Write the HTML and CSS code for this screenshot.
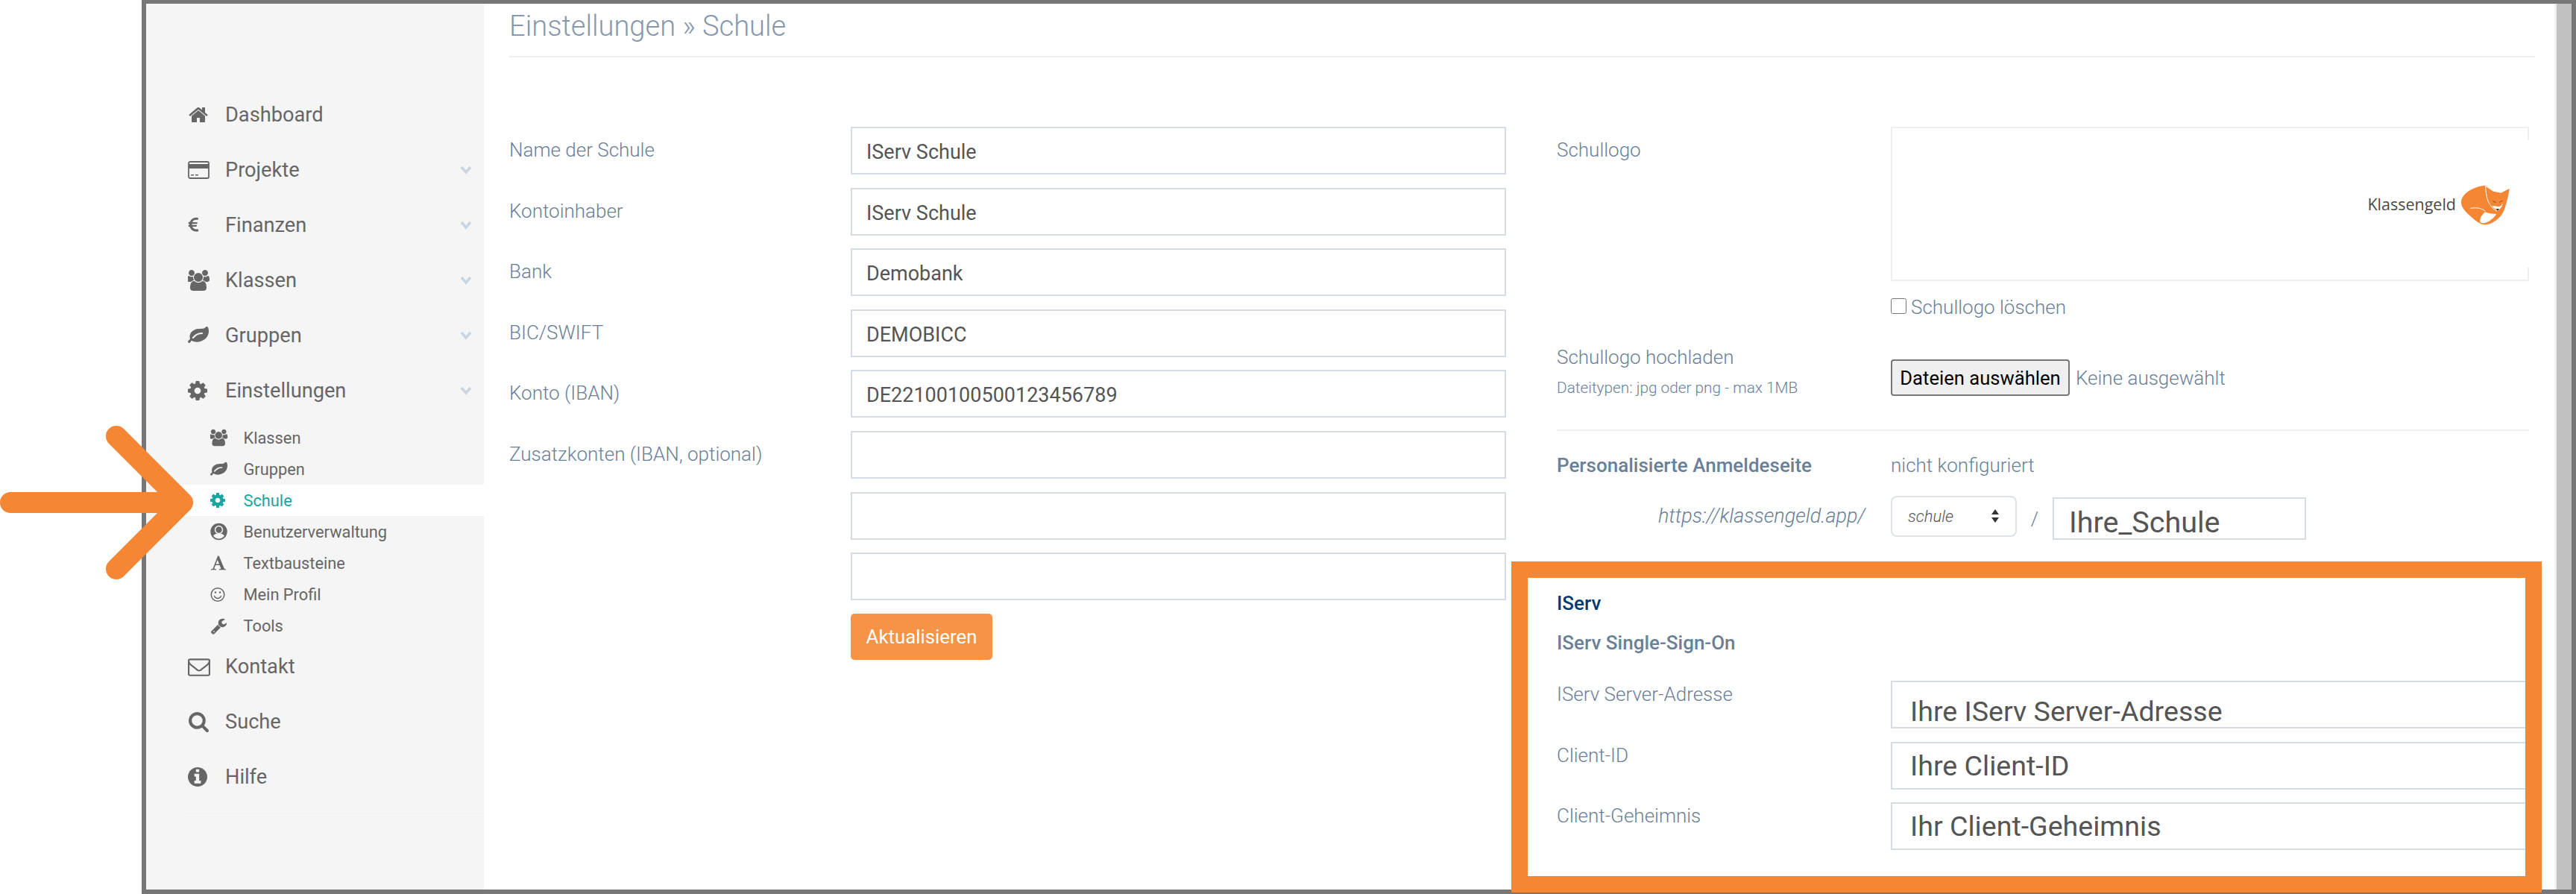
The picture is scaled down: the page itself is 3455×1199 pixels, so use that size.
FILE: index.html
```html
<!DOCTYPE html>
<html lang="de">
<head>
	<meta charset="UTF-8">
	<title>Einstellungen - Schule</title>
	<link rel="stylesheet" href="styles.css">
</head>
<body>
	<div class="frame">
		<div class="sidebar">
			<ul class="nav">
				<li class="nav-item"><svg class="ico" width="28" height="28" viewBox="0 0 1792 1792"><path d="M1472 992v480q0 26-19 45t-45 19h-384v-384h-256v384h-384q-26 0-45-19t-19-45v-480q0-1 .5-3t.5-3l575-474 575 474q1 2 1 6zm223-69l-62 74q-8 9-21 11h-3q-13 0-21-7l-692-577-692 577q-12 8-24 7-13-2-21-11l-62-74q-8-10-7-23.500t11-21.500l719-599q32-26 76-26t76 26l244 204v-195q0-14 9-23t23-9h192q14 0 23 9t9 23v408l219 182q10 8 11 21.500t-7 23.500z"/></svg><span>Dashboard</span></li>
				<li class="nav-item"><svg class="ico" width="29" height="24" viewBox="0 0 29 24"><rect x="1" y="1" width="27" height="22" rx="2" fill="none" stroke="#666" stroke-width="1.800"/><rect x="1" y="4" width="27" height="6"/><rect x="4" y="18" width="4" height="1.500"/><rect x="10" y="18" width="4" height="1.500"/></svg><span>Projekte</span><svg class="chev" width="16" height="12" viewBox="0 0 16 12"><path d="M2 2l6 7 6-7"/></svg></li>
				<li class="nav-item"><svg class="ico" width="24" height="26" viewBox="0 0 1792 1792"><path transform="translate(-330 0)" d="M1360 1307l35 159q3 12-3 22.500t-17 14.500l-5 1q-4 2-10.500 3.500t-16 4.500-21.500 5.500-25.500 5-30 5-33.500 4.500-36.500 3-38.500 1q-234 0-409-130.500t-238-351.500h-95q-13 0-22.500-9.500t-9.500-22.500v-113q0-13 9.500-22.500t22.500-9.500h66q-2-57 1-105h-67q-14 0-23-9t-9-23v-114q0-14 9-23t23-9h98q67-210 243.500-338t400.500-128q102 0 194 23 11 3 20 15 6 11 3 24l-43 159q-3 13-14 19.500t-24 2.500l-4-1q-4-1-11.500-2.500l-17.500-3.500-22.500-3.500-26-3-29-2.500-29.500-1q-126 0-226 64t-150 176h468q16 0 25 12 10 12 7 26l-24 114q-5 26-32 26h-488q-3 37 0 105h459q15 0 25 12 9 12 6 27l-24 112q-2 11-11 18.500t-20 7.500h-387q48 117 149.500 185.500t228.500 68.500q18 0 36-1.500t33.500-3.500 29.500-4.500 24.500-5 18.500-4.500l12-3 5-2q13-5 26 2 12 7 15 21z"/></svg><span>Finanzen</span><svg class="chev" width="16" height="12" viewBox="0 0 16 12"><path d="M2 2l6 7 6-7"/></svg></li>
				<li class="nav-item"><svg class="ico" width="30" height="30" viewBox="0 0 1920 1792"><path id="users" d="M529 896q-162 5-265 128h-134q-82 0-138-40.500t-56-118.500q0-353 124-353 6 0 43.500 21t97.500 42.500 119 21.500q67 0 133-23-5 37-5 66 0 139 81 256zm1071 637q0 120-73 189.500t-194 69.500h-874q-121 0-194-69.500t-73-189.500q0-53 3.500-103.500t14-109 26.500-108.500 43-97.500 62-81 85.500-53.500 111.500-20q10 0 43 21.500t73 48 107 48 135 21.500 135-21.500 107-48 73-48 43-21.500q61 0 111.500 20t85.500 53.500 62 81 43 97.500 26.500 108.500 14 109 3.500 103.500zm-1024-1277q0 106-75 181t-181 75-181-75-75-181 75-181 181-75 181 75 75 181zm704 384q0 159-112.500 271.500t-271.500 112.500-271.500-112.500-112.500-271.500 112.500-271.500 271.500-112.500 271.500 112.500 112.500 271.500zm576 225q0 78-56 118.500t-138 40.500h-134q-103-123-265-128 81-117 81-256 0-29-5-66 66 23 133 23 59 0 119-21.500t97.500-42.500 43.500-21q124 0 124 353zm-128-609q0 106-75 181t-181 75-181-75-75-181 75-181 181-75 181 75 75 181z"/></svg><span>Klassen</span><svg class="chev" width="16" height="12" viewBox="0 0 16 12"><path d="M2 2l6 7 6-7"/></svg></li>
				<li class="nav-item"><svg class="ico" width="28" height="28" viewBox="0 0 1792 1792"><path id="leaf" d="M1280 704q0-26-19-45t-45-19q-172 0-318 49.500t-259.500 134-235.500 219.500q-19 21-19 45 0 26 19 45t45 19q24 0 45-19 27-24 74-71t67-66q137-124 268.500-176t313.500-52q26 0 45-19t19-45zm512-198q0 95-20 193-46 224-184.500 383t-357.500 268q-214 108-438 108-148 0-286-47-15-5-88-42t-96-37q-16 0-39.500 32t-45 70-52.500 70-60 32q-30 0-51-11t-31-24-27-42q-2-4-6-11t-5.500-10-3-9.500-1.500-13.500q0-35 31-73.500t68-65.500 68-56 31-48q0-4-14-38t-16-44q-9-51-9-104 0-115 43.500-220t119-184.500 170.500-139 204-95.500q55-18 145-25.500t179.500-9 178.500-6 163.500-24 113.500-56.500l29.500-29.500 29.500-28 27-20 36.500-16 43.500-4.500q39 0 70.500 46t47.500 112 24 124 8 96z"/></svg><span>Gruppen</span><svg class="chev" width="16" height="12" viewBox="0 0 16 12"><path d="M2 2l6 7 6-7"/></svg></li>
				<li class="nav-item"><svg class="ico" width="26" height="26" viewBox="128 128 1536 1536"><path id="cog" d="M1152 896q0-106-75-181t-181-75-181 75-75 181 75 181 181 75 181-75 75-181zm512-109v222q0 12-8 23t-20 13l-185 28q-19 54-39 91 35 50 107 138 10 12 10 25t-9 23q-27 37-99 108t-94 71q-12 0-26-9l-138-108q-44 23-91 38-16 136-29 186-7 28-36 28h-222q-14 0-24.500-8.500t-11.500-21.500l-28-184q-49-16-90-37l-141 107q-10 9-25 9-14 0-25-11-126-114-165-168-7-10-7-23 0-12 8-23 15-21 51-66.500t54-70.500q-27-50-41-99l-183-27q-13-2-21-12.500t-8-23.500v-222q0-12 8-23t19-13l186-28q14-46 39-92-40-57-107-138-10-12-10-24 0-10 9-23 26-36 98.500-107.500t94.500-71.500q13 0 26 10l138 107q44-23 91-38 16-136 29-186 7-28 36-28h222q14 0 24.500 8.500t11.500 21.500l28 184q49 16 90 37l142-107q9-9 24-9 13 0 25 10 129 119 165 170 7 8 7 22 0 12-8 23-15 21-51 66.500t-54 70.500q26 50 41 98l183 28q13 2 21 12.500t8 23.500z"/></svg><span>Einstellungen</span><svg class="chev" width="16" height="12" viewBox="0 0 16 12"><path d="M2 2l6 7 6-7"/></svg></li>
				<li>
					<ul class="subnav">
						<li class="sub-item"><svg class="ico" width="24" height="24" viewBox="0 0 1920 1792"><use href="#users"/></svg><span>Klassen</span></li>
						<li class="sub-item"><svg class="ico" width="23" height="23" viewBox="0 0 1792 1792"><use href="#leaf"/></svg><span>Gruppen</span></li>
						<li class="sub-item current"><svg class="ico" width="20" height="20" viewBox="128 128 1536 1536"><use href="#cog"/></svg><span>Schule</span></li>
						<li class="sub-item"><svg class="ico" width="23" height="24" viewBox="0 0 23 24"><circle cx="11.500" cy="12" r="11.200"/><circle cx="11.500" cy="9.500" r="5" fill="none" stroke="#f5f5f5" stroke-width="1.500"/><path fill="#f5f5f5" d="M4 17.500c2-2.500 4.500-3.200 7.500-3.200s5.500.7 7.500 3.200c-2 2.700-4.700 3.900-7.500 3.900S6 20.200 4 17.500z"/></svg><span>Benutzerverwaltung</span></li>
						<li class="sub-item"><svg class="ico" width="22" height="24" viewBox="0 0 1792 1792"><path d="M789 559l-170 450q33 0 136.500 2t160.500 2q19 0 57-2-87-253-184-452zm-725 1105l2-79q23-7 56-12.500t57-10.500 49.500-14.500 44.500-29 31-50.500l237-616 280-724h128q8 14 11 21l205 480q33 78 106 257.500t114 274.500q15 34 58 144.500t72 168.500q20 45 35 57 19 15 88 29.500t84 20.500q6 38 6 57 0 5-.5 13.500t-.5 12.500q-63 0-190-8t-191-8q-76 0-215 7t-178 8q0-43 4-78l131-28q1 0 12.500-2.500t15.500-3.500 14.500-4.500 15-6.500 11-8 9-11 2.500-14q0-16-31-96.500t-72-177.500-42-100l-450-2q-26 58-76.500 195.500t-50.500 162.500q0 22 14 37.500t43.500 24.500 48.500 13.500 57 8.500 41 4q1 19 1 58 0 9-2 27-58 0-174.500-10t-174.500-10q-8 0-26.500 4t-21.500 4q-80 14-188 14z"/></svg><span>Textbausteine</span></li>
						<li class="sub-item"><svg class="ico" width="21" height="21" viewBox="0 0 21 21" fill="none" stroke="#666" stroke-width="1.500"><circle cx="10" cy="10.500" r="8.800"/><path d="M5.500 12.500c1 2 2.700 3 4.500 3s3.500-1 4.500-3" stroke-linecap="round"/><circle cx="7" cy="7.500" r="1.200" fill="#666" stroke="none"/><circle cx="13" cy="7.500" r="1.200" fill="#666" stroke="none"/></svg><span>Mein Profil</span></li>
						<li class="sub-item"><svg class="ico" width="23" height="23" viewBox="0 0 1792 1792"><path d="M448 1472q0-26-19-45t-45-19-45 19-19 45 19 45 45 19 45-19 19-45zm644-420l-682 682q-37 37-90 37-52 0-91-37l-106-108q-38-36-38-90 0-53 38-91l681-681q39 98 114.500 173.500t173.500 114.500zm634-435q0 39-23 106-47 134-164.500 217.500t-258.500 83.500q-185 0-316.500-131.500t-131.500-316.500 131.500-316.500 316.500-131.500q58 0 121.500 16.500t107.500 46.500q16 11 16 28t-16 28l-293 169v224l193 107q5-3 79-48.500t135.500-81 70.500-35.500q15 0 23.500 10t8.500 25z"/></svg><span>Tools</span></li>
					</ul>
				</li>
				<li class="nav-item"><svg class="ico" width="30" height="30" viewBox="0 0 1792 1792"><path d="M1664 1504v-768q-32 36-69 66-268 206-426 338-51 43-83 67t-86.500 48.500-102.500 24.500h-2q-48 0-102.500-24.500t-86.500-48.500-83-67q-158-132-426-338-37-30-69-66v768q0 13 9.500 22.500t22.500 9.500h1472q13 0 22.500-9.500t9.500-22.500zm0-1051v-24.500l-.5-13-3-12.500-5.500-9-9-7.500-14-2.500h-1472q-13 0-22.500 9.500t-9.500 22.500q0 168 147 284 193 152 401 317 6 5 35 29.500t46 37.500 44.500 31.500 50.500 27.500 43 9h2q20 0 43-9t50.500-27.500 44.500-31.500 46-37.500 35-29.500q208-165 401-317 54-43 100.500-115.500t46.500-131.500zm128-37v1088q0 66-47 113t-113 47h-1472q-66 0-113-47t-47-113v-1088q0-66 47-113t113-47h1472q66 0 113 47t47 113z"/></svg><span>Kontakt</span></li>
				<li class="nav-item"><svg class="ico" width="29" height="29" viewBox="0 0 1792 1792"><path d="M1216 832q0-185-131.500-316.500t-316.500-131.500-316.500 131.500-131.500 316.500 131.500 316.500 316.500 131.500 316.500-131.500 131.500-316.500zm512 832q0 52-38 90t-90 38q-54 0-90-38l-343-342q-179 124-399 124-143 0-273.500-55.500t-225-150-150-225-55.500-273.500 55.500-273.500 150-225 225-150 273.500-55.500 273.500 55.500 225 150 150 225 55.500 273.500q0 220-124 399l343 343q37 37 37 90z"/></svg><span>Suche</span></li>
				<li class="nav-item"><svg class="ico" width="26" height="26" viewBox="128 128 1536 1536"><path d="M1152 1376v-160q0-14-9-23t-23-9h-96v-512q0-14-9-23t-23-9h-320q-14 0-23 9t-9 23v160q0 14 9 23t23 9h96v320h-96q-14 0-23 9t-9 23v160q0 14 9 23t23 9h448q14 0 23-9t9-23zm-128-896v-160q0-14-9-23t-23-9h-192q-14 0-23 9t-9 23v160q0 14 9 23t23 9h192q14 0 23-9t9-23zm640 416q0 209-103 385.500t-279.500 279.500-385.500 103-385.500-103-279.500-279.500-103-385.500 103-385.500 279.500-279.500 385.500-103 385.500 103 279.500 279.500 103 385.500z"/></svg><span>Hilfe</span></li>
			</ul>
		</div>

		<div class="main">
			<h1 class="title">Einstellungen » Schule</h1>
			<div class="columns">
				<div class="col-left">
					<div class="field"><label>Name der Schule</label><input class="input" value="IServ Schule"></div>
					<div class="field"><label>Kontoinhaber</label><input class="input" value="IServ Schule"></div>
					<div class="field"><label>Bank</label><input class="input" value="Demobank"></div>
					<div class="field"><label>BIC/SWIFT</label><input class="input" value="DEMOBICC"></div>
					<div class="field"><label>Konto (IBAN)</label><input class="input" value="DE22100100500123456789"></div>
					<div class="field">
						<label>Zusatzkonten (IBAN, optional)</label>
						<div class="stack">
							<input class="input">
							<input class="input">
							<input class="input">
						</div>
					</div>
					<div class="actions"><button class="btn-save">Aktualisieren</button></div>
				</div>

				<div class="col-right">
					<div class="row">
						<label>Schullogo</label>
						<div class="logo-box">
							<span class="logo-text">Klassengeld</span>
							<svg class="fox" width="90" height="70" viewBox="0 0 270 210">
								<path fill="#f58634" d="M130 29C90 31 45 52 32 84c-8 24 8 44 28 62 17 15 32 30 50 38 14 5 32 3 50-8 22-13 37-30 45-54 9-26 16-54 19-80l-34 17-30-6z"/>
								<path fill="none" stroke="#fff" stroke-width="3" d="M128 31c1 26 5 58 18 76 8 12 17 20 28 25 8-4 18-16 22-30M128 31l30 20 32 2 32-12"/>
								<path fill="none" stroke="#fff" stroke-width="3" stroke-linecap="round" d="M68 121c22-4 46-1 58 11"/>
								<path fill="#fff" d="M126 136c-14 12-22 28-20 38 1 6 8 8 18 6 18-3 38-20 48-36-16 0-34-2-46-8z"/>
								<path fill="#fff" d="M154 113c6 5 13 10 22 17 7-4 14-10 19-19-6-1-10 3-17 3-8 0-16-4-24-1z"/>
								<path fill="none" stroke="#7a4a20" stroke-width="3" d="M157 92l12 6M195 90l-11 7"/>
								<path fill="#333" d="M170 123h13l-6 9z"/>
							</svg>
						</div>
					</div>
					<div class="row check-row">
						<span></span>
						<label class="check"><input type="checkbox"> <span>Schullogo löschen</span></label>
					</div>
					<div class="row upload-row">
						<div>
							<label>Schullogo hochladen</label>
							<small>Dateitypen: jpg oder png - max 1MB</small>
						</div>
						<div class="file">
							<button class="btn-file">Dateien auswählen</button>
							<span>Keine ausgewählt</span>
						</div>
					</div>
					<hr class="rule">
					<div class="row login-row">
						<strong>Personalisierte Anmeldeseite</strong>
						<span>nicht konfiguriert</span>
					</div>
					<div class="row url-row">
						<em class="url">https://klassengeld.app/</em>
						<div class="url-parts">
							<div class="select-wrap">
								<select class="select"><option>schule</option></select>
								<svg class="select-arrows" width="14" height="20" viewBox="0 0 14 20"><path d="M7 1l5 7H2zM7 19l5-7H2z" fill="#333"/></svg>
							</div>
							<span class="slash">/</span>
							<input class="input input-slug" value="Ihre_Schule">
						</div>
					</div>
					<h3 class="iserv-head">IServ</h3>
					<h4 class="iserv-sub">IServ Single-Sign-On</h4>
					<div class="row sso-row"><label>IServ Server-Adresse</label><input class="input input-big input-low" value="Ihre IServ Server-Adresse"></div>
					<div class="row sso-row"><label>Client-ID</label><input class="input input-big" value="Ihre Client-ID"></div>
					<div class="row sso-row"><label>Client-Geheimnis</label><input class="input input-big" value="Ihr Client-Geheimnis"></div>
				</div>
			</div>
		</div>

		<div class="scrollbar"></div>
	</div>

	<!-- Markierungen über dem Screenshot -->
	<svg class="mark-arrow" width="265" height="210" viewBox="0 0 265 210">
		<path d="M14 105H245M156 16l89 89-89 89" fill="none" stroke="#f58634" stroke-width="28" stroke-linecap="round" stroke-linejoin="round"/>
	</svg>
	<div class="mark-box"></div>
</body>
</html>
```

FILE: styles.css
```css
*{padding: 0;margin: 0;box-sizing: border-box;}
html,body{
	width: 3455px;
	height: 1199px;
	overflow: hidden;
	background-color: #fff;
}
body{
	position: relative;
	font-family: Roboto, "Liberation Sans", sans-serif;
	font-weight: 300;
	color: #6a8098;
	font-size: 26px;
}
ul{
	list-style: none;
}

.frame{
	display: flex;
	width: 3265px;
	height: 1199px;
	margin-left: 190px;
	border: 6px solid #777;
	border-top-width: 5px;
}

/* Seitenleiste */
.sidebar{
	flex: 0 0 453px;
	background-color: #f5f5f5;
	padding: 112px 0 0 50px;
}
.nav{
	border-bottom: 1px solid #f1f1f1;
	padding-bottom: 11px;
}
.nav-item,.sub-item{
	display: grid;
	align-items: center;
	font-weight: 400;
	color: #666;
	fill: #666;
}
.nav-item{
	grid-template-columns: 50px 1fr auto;
	height: 74px;
	padding: 0 16px 0 6px;
	font-size: 27.200px;
}
.chev{
	fill: none;
	stroke: #c9d6e2;
	stroke-width: 3.500;
}
.subnav{
	margin: 5px 0 -4px;
}
.sub-item{
	grid-template-columns: 44.500px 1fr;
	height: 42.100px;
	padding-left: 36px;
	font-size: 21.800px;
}
.sub-item.current{
	background-color: #fff;
	color: #1aa5a0;
	fill: #1aa5a0;
}

/* Inhalt */
.main{
	flex: 1;
	min-width: 0;
	padding: 0 26px 0 34px;
}
.title{
	height: 72px;
	line-height: 60px;
	font-size: 38.100px;
	font-weight: 300;
	color: #8798ad;
	border-bottom: 2px solid #f0f0f0;
}
.columns{
	display: flex;
	gap: 68px;
	margin-top: 93px;
}
.col-left{
	flex: 0 0 1337px;
}
.col-right{
	flex: 0 0 1304px;
}

.input{
	display: block;
	width: 100%;
	height: 64px;
	border: 2px solid #d6dce4;
	padding: 4px 19px 0;
	font-family: Roboto, sans-serif;
	font-size: 27px;
	color: #555;
	background-color: #fff;
	outline: none;
}
.field{
	display: grid;
	grid-template-columns: 458px 879px;
	margin-bottom: 17.600px;
}
.field label{
	line-height: 63px;
}
.stack{
	display: flex;
	flex-direction: column;
	gap: 17.600px;
}
.actions{
	margin: 1px 0 0 458px;
}
.btn-save{
	width: 190px;
	height: 62px;
	border: 0;
	border-radius: 5px;
	background-color: #f79347;
	color: #fff;
	font-family: Roboto, sans-serif;
	font-size: 25.800px;
}

/* rechte Spalte */
.row{
	display: grid;
	grid-template-columns: 448px 856px;
}
.row > label{
	line-height: 63px;
}
.logo-box{
	position: relative;
	display: flex;
	align-items: center;
	justify-content: flex-end;
	height: 207px;
	border: 2px solid #eee;
	padding-right: 9px;
}
.logo-box::after{
	content: "";
	position: absolute;
	right: -2px;
	top: 16px;
	bottom: 16px;
	width: 2px;
	background-color: #fff;
}
.logo-text{
	font-family: "Open Sans", sans-serif;
	font-weight: 400;
	font-size: 21.500px;
	color: #4a4a4a;
	margin-right: -3px;
}
.check-row{
	margin-top: 22px;
}
.check{
	display: flex;
	align-items: center;
	gap: 6px;
	height: 22px;
}
.check input{
	width: 21px;
	height: 21px;
}
.check span{
	padding-top: 4px;
}
.upload-row{
	margin-top: 43px;
}
.upload-row label,.upload-row small{
	display: block;
	line-height: 30px;
}
.upload-row small{
	margin-top: 11px;
	font-size: 20.800px;
}
.file{
	display: flex;
	align-items: center;
	gap: 8px;
	margin-top: 18px;
	height: 49px;
}
.btn-file{
	width: 240px;
	height: 49px;
	border: 2px solid #767676;
	border-radius: 4px;
	background-color: #efefef;
	color: #000;
	font-family: Roboto, sans-serif;
	font-size: 25.600px;
}
.rule{
	margin-top: 41px;
	border: 0;
	border-top: 2px solid #eee;
}
.login-row{
	margin-top: 31px;
	line-height: 30px;
}
.login-row strong{
	font-weight: 500;
}
.url-row{
	margin-top: 26px;
}
.url{
	text-align: right;
	padding-right: 34px;
	line-height: 55px;
	font-size: 27px;
}
.url-parts{
	display: flex;
	align-items: flex-start;
}
.select-wrap{
	position: relative;
	width: 169px;
	height: 55px;
}
.select{
	appearance: none;
	width: 100%;
	height: 100%;
	border: 2px solid #dfe3e8;
	border-radius: 8px;
	padding-left: 21px;
	background-color: #fff;
	font-family: Roboto, sans-serif;
	font-size: 22px;
	font-style: italic;
	font-weight: 300;
	color: #555;
}
.select-arrows{
	position: absolute;
	left: 133px;
	top: 17px;
}
.slash{
	width: 48px;
	text-align: center;
	line-height: 62px;
}
.input-slug{
	width: 340px;
	height: 57px;
	margin-top: 2px;
	padding: 10px 20px 0;
	font-size: 39.500px;
}
.iserv-head{
	margin-top: 67px;
	line-height: 30px;
	font-size: 26px;
	font-weight: 500;
	color: #003a70;
}
.iserv-sub{
	margin-top: 23px;
	line-height: 30px;
	font-size: 26px;
	font-weight: 500;
	color: #6a8098;
}
.sso-row{
	margin-bottom: 17.500px;
}
.iserv-sub + .sso-row{
	margin-top: 36px;
}
.sso-row label{
	line-height: 36px;
}
.input-big{
	padding: 0 24px;
	font-size: 37.600px;
}
.input-low{
	padding-top: 18px;
}

.scrollbar{
	flex: 0 0 23px;
	background-color: #c1c1c1;
	border-left: 3px solid #eee;
}

/* Markierungen */
.mark-arrow{
	position: absolute;
	left: 0;
	top: 569px;
}
.mark-box{
	position: absolute;
	left: 2027px;
	top: 753px;
	width: 1382px;
	height: 444px;
	border: 22px solid #f58634;
}
```
